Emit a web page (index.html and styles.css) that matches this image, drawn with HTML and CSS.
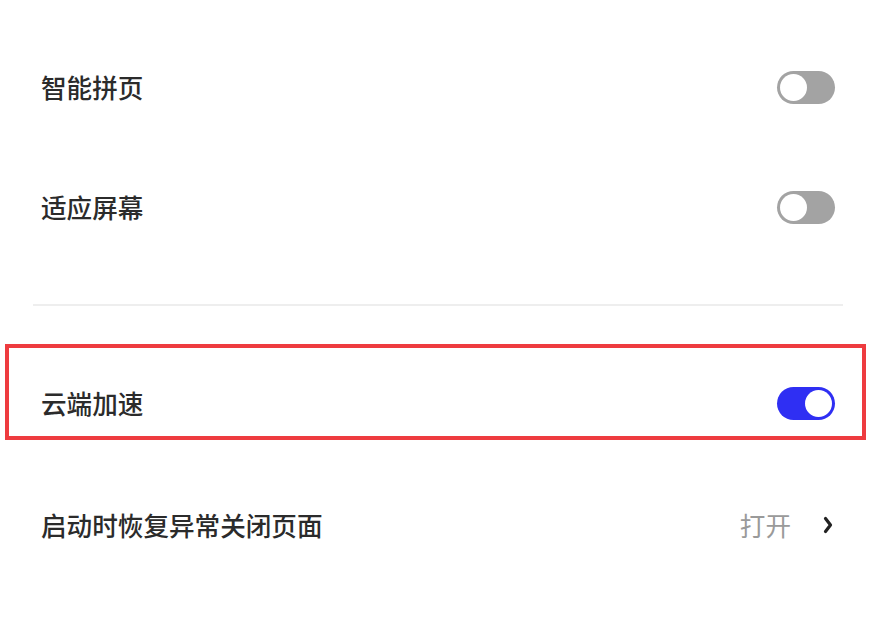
FILE: index.html
```html
<!DOCTYPE html>
<html lang="zh">
<head>
<meta charset="utf-8">
<title>设置</title>
<link rel="stylesheet" href="styles.css">
</head>
<body>
<div class="page">
  <div class="row">
    <span class="label">智能拼页</span>
    <span class="toggle"><span class="knob"></span></span>
  </div>
  <div class="row">
    <span class="label">适应屏幕</span>
    <span class="toggle"><span class="knob"></span></span>
  </div>
  <div class="divider"></div>
  <div class="highlight">
    <div class="row row-inner">
      <span class="label">云端加速</span>
      <span class="toggle on"><span class="knob"></span></span>
    </div>
  </div>
  <div class="row row-last">
    <span class="label">启动时恢复异常关闭页面</span>
    <span class="action">
      <span class="value">打开</span>
      <svg class="chevron" width="10" height="18" viewBox="0 0 10 18"><path d="M2.5 2.5 L7.5 9 L2.5 15.5" fill="none" stroke="#222222" stroke-width="3.2" stroke-linecap="round" stroke-linejoin="round"/></svg>
    </span>
  </div>
</div>
</body>
</html>
```
FILE: styles.css
```css
html, body {
  margin: 0;
  padding: 0;
  background: #ffffff;
}
body {
  font-family: "Noto Sans CJK SC", "Noto Sans", sans-serif;
  color: #333333;
}
.page {
  padding-top: 27px;
  width: 871px;
}
.row {
  height: 120px;
  box-sizing: border-box;
  padding: 0 36px 0 41px;
  display: flex;
  align-items: center;
  justify-content: space-between;
}
.label {
  font-size: 25.6px;
  font-weight: 500;
  line-height: 34px;
  color: #2b2b2b;
}
.toggle {
  width: 58px;
  height: 33px;
  border-radius: 17px;
  background: #a3a3a3;
  display: flex;
  align-items: center;
  padding: 0 3px;
  box-sizing: border-box;
}
.toggle .knob {
  width: 27px;
  height: 27px;
  border-radius: 50%;
  background: #ffffff;
}
.toggle.on {
  background: #2f2ff3;
  justify-content: flex-end;
}
.divider {
  margin: 37px 28px 0 33px;
  height: 2px;
  background: #eeeeee;
}
.highlight {
  margin: 38px 5px 0 5px;
  height: 96px;
  box-sizing: border-box;
  border: 4px solid #ee3b3f;
}
.row-inner {
  height: 66px;
  margin-top: 22px;
  padding: 0 27px 0 32px;
}
.row-last {
  margin-top: 25px;
}
.action {
  display: flex;
  align-items: center;
}
.value {
  font-size: 25.6px;
  line-height: 34px;
  color: #9a9a9a;
  margin-right: 32px;
}
.chevron {
  display: block;
  margin-right: 2px;
}
```
